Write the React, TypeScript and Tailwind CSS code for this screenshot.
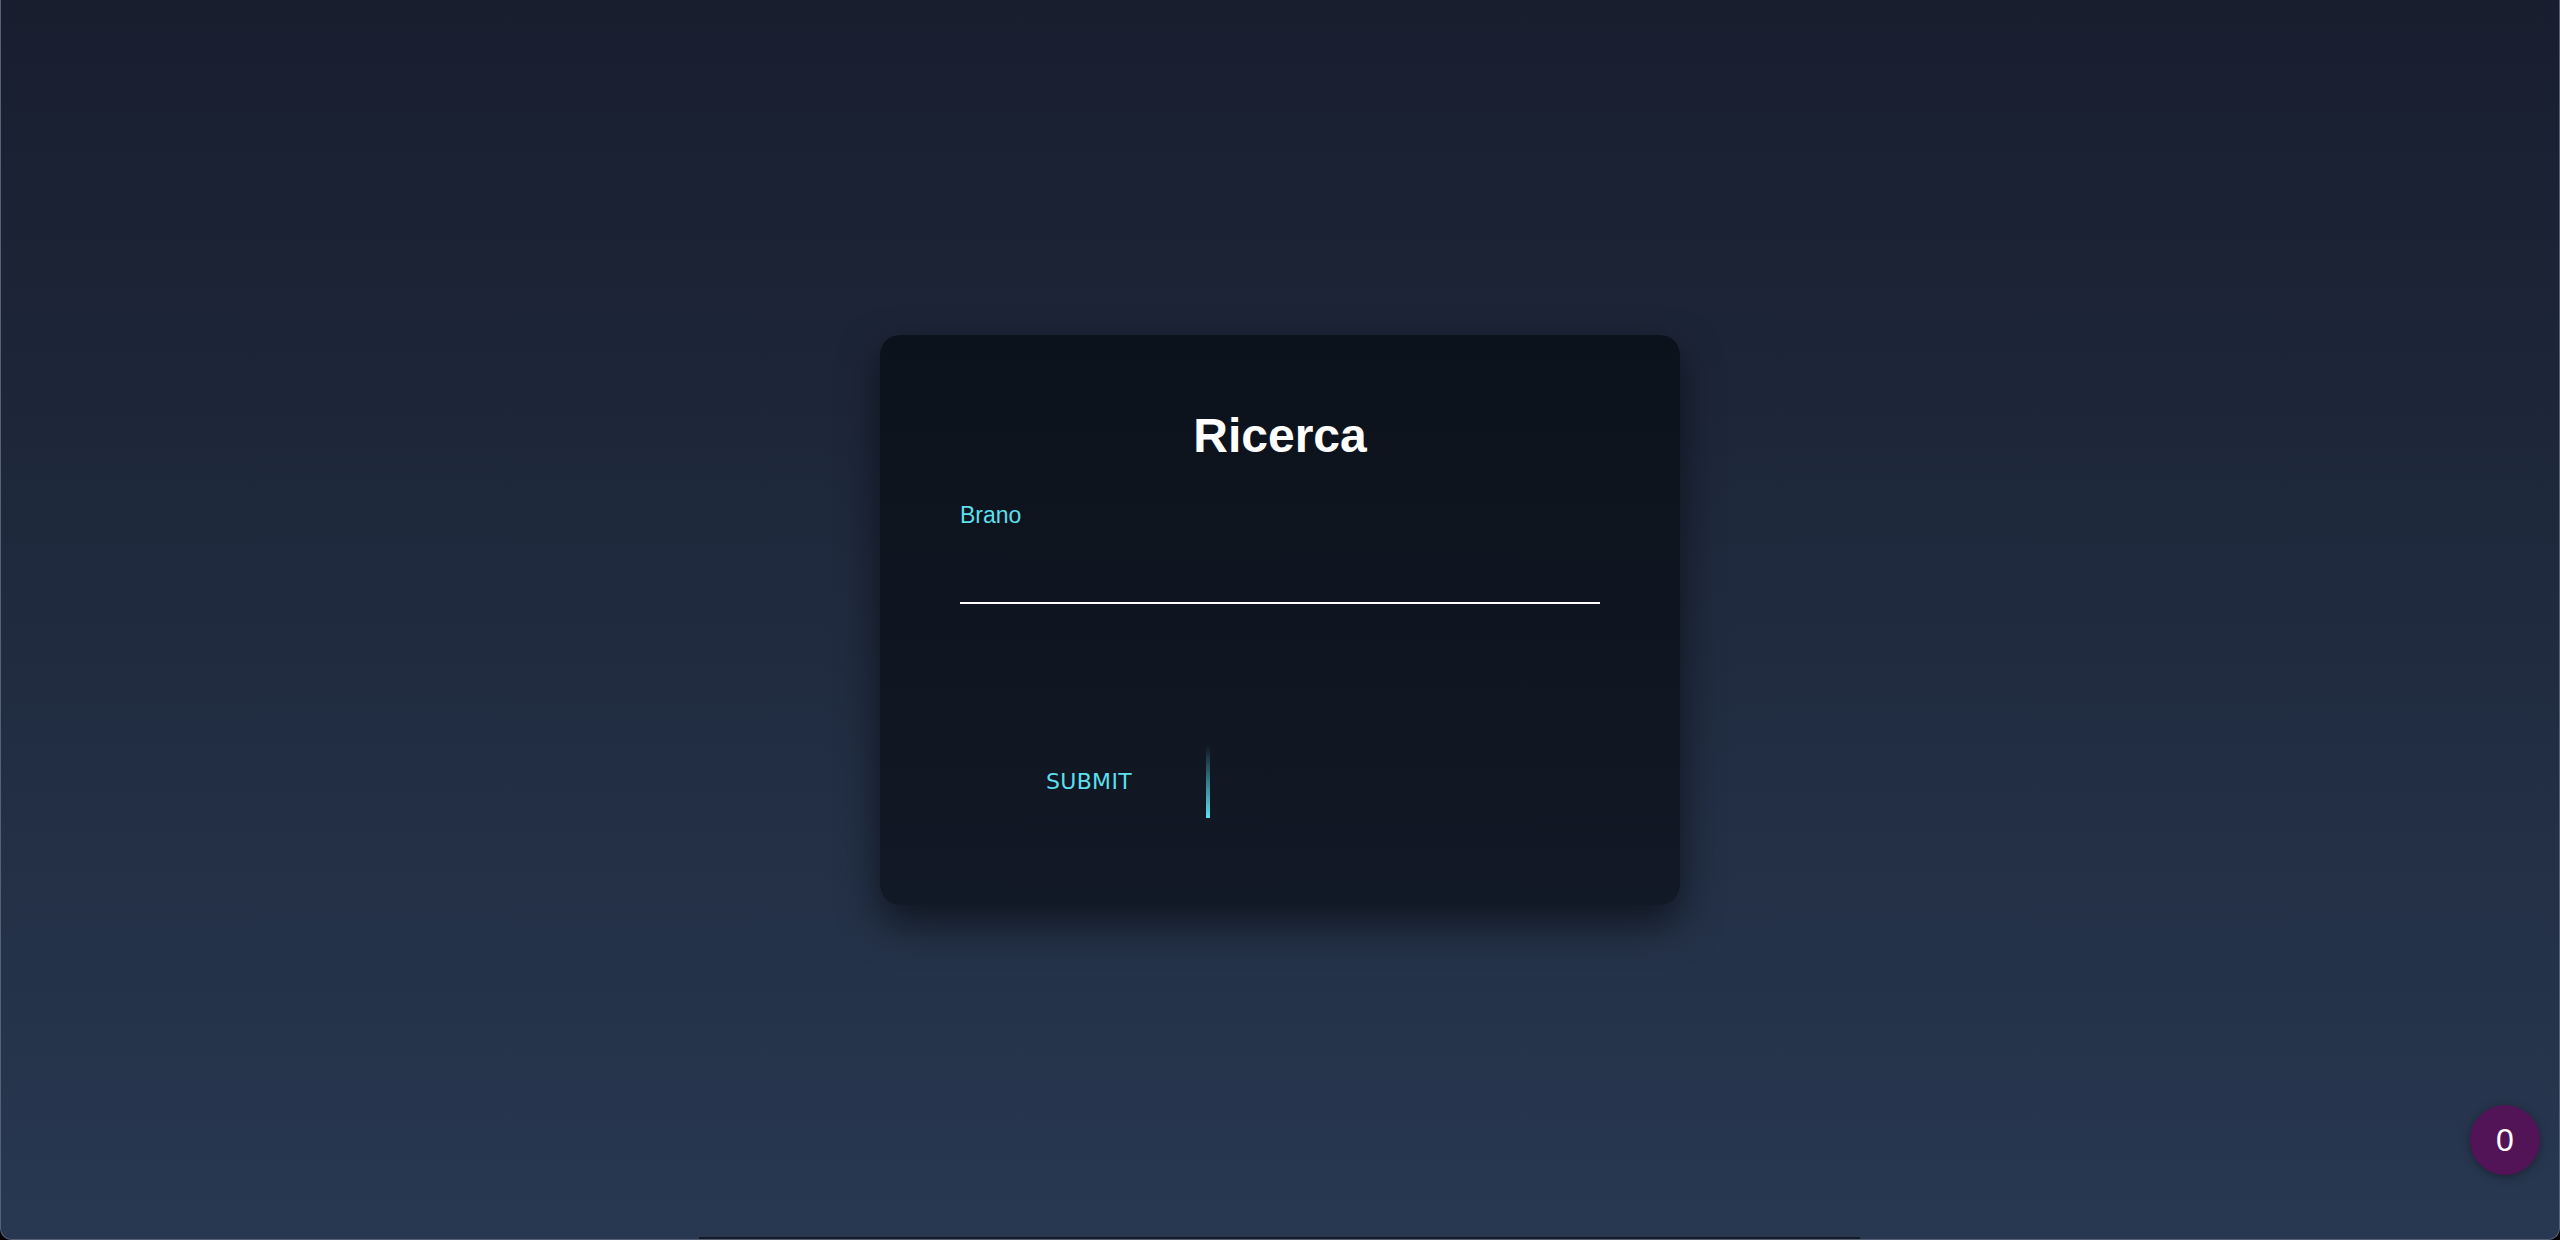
import React from "react";

export default function App() {
  return (
    <div className="w-full h-[1240px] bg-black">
      <div className="relative w-full h-full rounded-b-[12px] border border-t-0 border-[#566176] bg-gradient-to-b from-[#181e2e] to-[#283851] flex items-center justify-center overflow-hidden">
        <div className="w-[800px] h-[570px] rounded-[20px] bg-gradient-to-b from-[#0c121b] to-[#121926] shadow-[0_18px_40px_rgba(0,0,0,0.55)] px-[80px] pt-[73px] flex flex-col">
          <h2
            className="text-white text-center text-[48px] font-bold leading-[55px]"
            style={{ fontFamily: '"Liberation Sans", Arial, sans-serif' }}
          >
            Ricerca
          </h2>
          <div className="mt-[39px] flex flex-col">
            <label
              className="text-[23px] leading-[27px] text-[#5ddfec]"
              style={{ fontFamily: '"Liberation Sans", Arial, sans-serif' }}
            >
              Brano
            </label>
            <div className="h-[75px] border-b-2 border-white"></div>
          </div>
          <div className="mt-[142px] relative w-[248px] h-[72px] pl-[10px] flex items-center justify-center">
            <span
              className="text-[22px] text-[#5ddfec] tracking-[0.3px]"
              style={{ fontFamily: '"DejaVu Sans", Verdana, sans-serif' }}
            >
              SUBMIT
            </span>
            <span className="absolute right-[-2px] top-0 w-[4px] h-full bg-gradient-to-b from-transparent to-[#5ddfec]"></span>
          </div>
        </div>
        <div
          className="absolute right-[19px] bottom-[64px] w-[70px] h-[70px] rounded-full bg-[#521457] shadow-[0_2px_10px_rgba(0,0,0,0.35)] flex items-center justify-center text-white text-[32px]"
          style={{ fontFamily: '"Liberation Sans", Arial, sans-serif' }}
        >
          0
        </div>
        <div className="absolute bottom-0 left-[698px] w-[1161px] h-[2px] bg-[#151b26]"></div>
      </div>
    </div>
  );
}
